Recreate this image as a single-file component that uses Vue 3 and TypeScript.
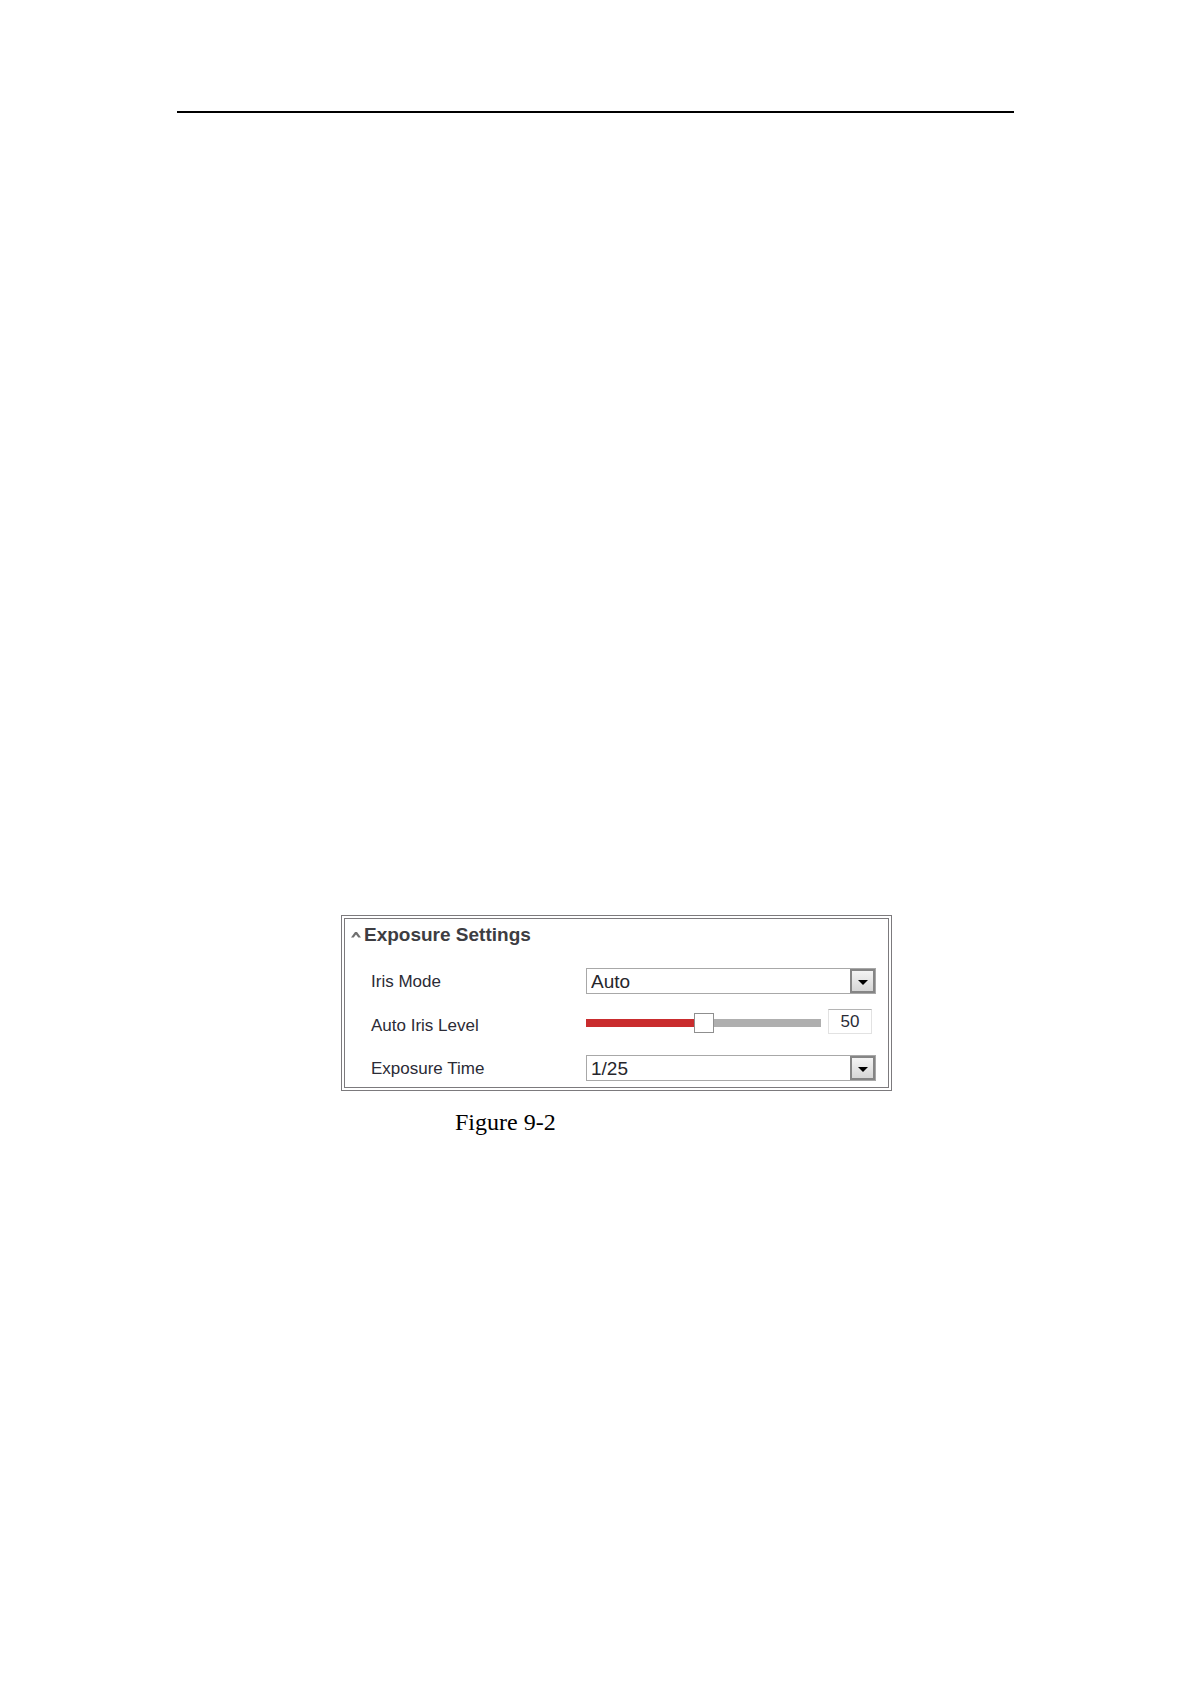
<script setup lang="ts">
import { computed, ref } from 'vue'

const open = ref(true)
const irisMode = ref('Auto')
const irisLevel = ref(50)
const exposureTime = ref('1/25')

const irisModes = ['Auto', 'Manual']
const exposureTimes = ['1/25', '1/50', '1/100', '1/250']

const fill = computed(() => ({ '--fill': `${irisLevel.value}%` }))
</script>

<template>
  <main class="page">
    <hr class="rule" />
    <figure class="figure">
      <div class="frame">
        <section class="panel">
          <h2 class="title">
            <button type="button" class="toggle" :aria-expanded="open" @click="open = !open">
              <svg class="chevron" width="12" height="8" viewBox="0 0 12 8" aria-hidden="true">
                <path d="M0 6.500 4 1h2l4 5.500H7.300L5 3.600 2.700 6.500z" fill="#707070" />
              </svg>
              Exposure Settings
            </button>
          </h2>
          <div v-if="open" class="rows">
            <div class="row">
              <label for="iris-mode">Iris Mode</label>
              <div class="drop">
                <select id="iris-mode" v-model="irisMode">
                  <option v-for="mode in irisModes" :key="mode">{{ mode }}</option>
                </select>
                <span class="arrow"></span>
              </div>
            </div>
            <div class="row level">
              <label for="iris-level">Auto Iris Level</label>
              <div class="slider">
                <input
                  id="iris-level"
                  v-model.number="irisLevel"
                  class="range"
                  type="range"
                  min="0"
                  max="100"
                  :style="fill"
                />
                <input v-model.number="irisLevel" class="value" type="text" aria-label="Auto Iris Level value" />
              </div>
            </div>
            <div class="row">
              <label for="exposure-time">Exposure Time</label>
              <div class="drop">
                <select id="exposure-time" v-model="exposureTime">
                  <option v-for="time in exposureTimes" :key="time">{{ time }}</option>
                </select>
                <span class="arrow"></span>
              </div>
            </div>
          </div>
        </section>
      </div>
      <figcaption class="caption">Figure 9-2</figcaption>
    </figure>
  </main>
</template>

<style>
body {
  margin: 0;
  background: #fff;
}
</style>

<style scoped>
.page {
  box-sizing: border-box;
  min-height: 100vh;
  padding: 111px 177px 0;
}

.rule {
  height: 2px;
  margin: 0;
  border: 0;
  background: #000;
}

.figure {
  margin: 802px 122px 0 164px;
}

.frame {
  padding: 2px;
  border: 1px solid #7c7a7d;
}

.panel {
  padding: 0 12px 6px 6px;
  border: 1px solid #7c7a7d;
  font-family: "Liberation Sans", Arial, sans-serif;
}

.title {
  height: 49px;
  margin: 0;
  font-size: 19px;
}

.toggle {
  display: flex;
  align-items: center;
  height: 32px;
  padding: 0;
  border: 0;
  background: none;
  color: #3d3d42;
  font: inherit;
}

.chevron {
  margin-right: 1px;
}

.rows {
  display: flex;
  flex-direction: column;
  gap: 15px;
  padding-left: 20px;
}

.row {
  display: grid;
  grid-template-columns: 215px 1fr;
  align-items: center;
}

.row label {
  padding-top: 2px;
  color: #2b2b36;
  font-size: 17px;
  line-height: 20px;
}

.level {
  height: 31px;
}

.drop {
  position: relative;
}

select {
  display: block;
  box-sizing: border-box;
  width: 100%;
  height: 26px;
  padding: 0 28px 0 4px;
  border: 1px solid #a8a8a8;
  border-radius: 0;
  appearance: none;
  background: #fff;
  color: #26262c;
  font: 19px "Liberation Sans", Arial, sans-serif;
}

.arrow {
  position: absolute;
  top: 1px;
  right: 1px;
  bottom: 1px;
  display: grid;
  place-items: center;
  box-sizing: border-box;
  width: 25px;
  border: 2px solid #858585;
  background: linear-gradient(#f4f4f4, #d6d6d6);
  pointer-events: none;
}

.arrow::before {
  content: "";
  margin-top: 2px;
  border: 5px solid transparent;
  border-top-color: #000;
  border-bottom: 0;
}

.slider {
  display: flex;
  align-items: center;
  align-self: start;
  gap: 7px;
  padding-right: 4px;
}

.range {
  flex: 1;
  min-width: 0;
  height: 20px;
  margin: 2px 0 0;
  appearance: none;
  background: linear-gradient(to right, #c92c2e var(--fill), #afafaf var(--fill)) center / 100% 8px no-repeat;
}

.range::-webkit-slider-thumb {
  box-sizing: border-box;
  width: 20px;
  height: 20px;
  border: 1px solid #8f8f8f;
  appearance: none;
  background: #fff;
}

.value {
  box-sizing: border-box;
  width: 44px;
  height: 25px;
  padding: 1px 0 0;
  border: 1px solid #e2e2e2;
  border-top-color: #b5b5b5;
  color: #2b2b36;
  font: 17px "Liberation Sans", Arial, sans-serif;
  text-align: center;
}

.caption {
  margin: 17px 0 0 114px;
  color: #000;
  font: 24px/28px "Liberation Serif", "Times New Roman", serif;
}
</style>
